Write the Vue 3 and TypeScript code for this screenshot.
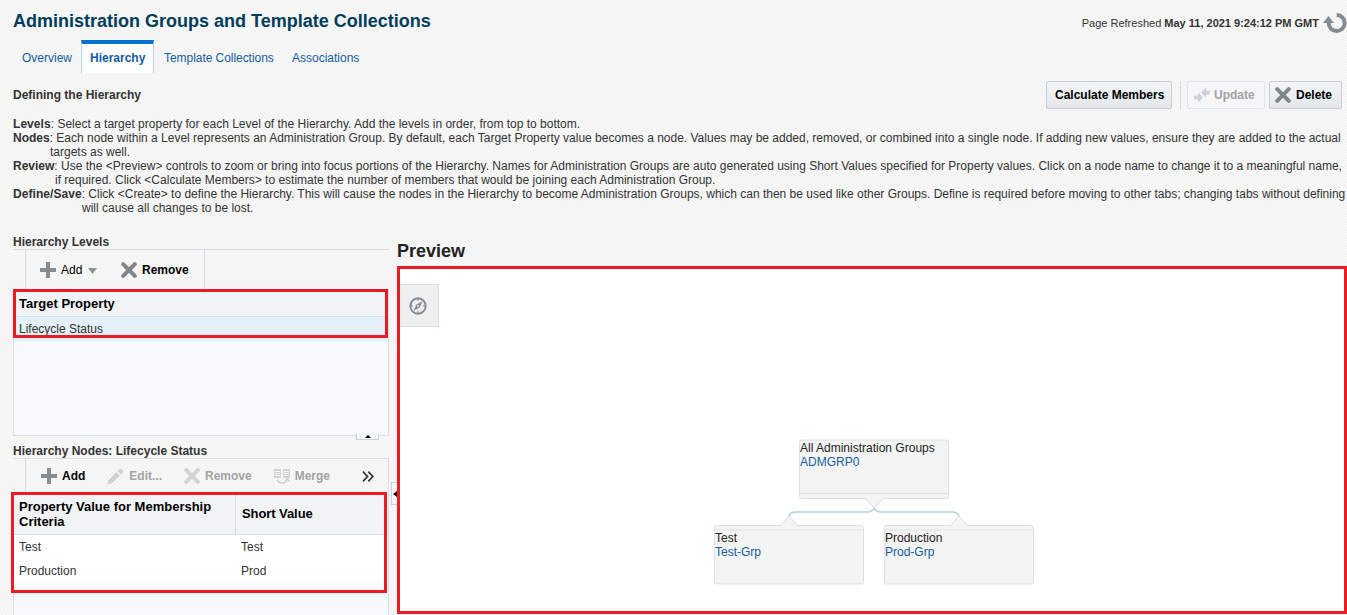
<script setup lang="ts">
interface Instruction { label: string; kind: string; first: string; second?: string }
interface GroupNode { title: string; name: string; kind: string }

const tabs = [
  { label: 'Overview', cls: 't1' },
  { label: 'Hierarchy', cls: 't2 active' },
  { label: 'Template Collections', cls: 't3' },
  { label: 'Associations', cls: 't4' },
]
const instructions: Instruction[] = [
  { label: 'Levels', kind: 'lev', first: 'Select a target property for each Level of the Hierarchy. Add the levels in order, from top to bottom.' },
  { label: 'Nodes', kind: 'nod', first: 'Each node within a Level represents an Administration Group. By default, each Target Property value becomes a node. Values may be added, removed, or combined into a single node. If adding new values, ensure they are added to the actual', second: 'targets as well.' },
  { label: 'Review', kind: 'rev', first: 'Use the <Preview> controls to zoom or bring into focus portions of the Hierarchy. Names for Administration Groups are auto generated using Short Values specified for Property values. Click on a node name to change it to a meaningful name,', second: 'if required. Click <Calculate Members> to estimate the number of members that would be joining each Administration Group.' },
  { label: 'Define/Save', kind: 'def', first: 'Click <Create> to define the Hierarchy. This will cause the nodes in the Hierarchy to become Administration Groups, which can then be used like other Groups. Define is required before moving to other tabs; changing tabs without defining', second: 'will cause all changes to be lost.' },
]
const rows = [
  { value: 'Test', short: 'Test' },
  { value: 'Production', short: 'Prod' },
]
const groups: GroupNode[] = [
  { title: 'All Administration Groups', name: 'ADMGRP0', kind: 'root' },
  { title: 'Test', name: 'Test-Grp', kind: 'test' },
  { title: 'Production', name: 'Prod-Grp', kind: 'prod' },
]
</script>

<template>
  <div class="page">
    <header class="top">
      <h1>Administration Groups and Template Collections</h1>
      <div class="refreshed">
        <span>Page Refreshed <b>May 11, 2021 9:24:12 PM GMT</b></span>
        <svg class="refresh" width="24" height="22" viewBox="0 0 24 22">
          <path d="M13.7 3A8 8 0 1 1 5.700 10.500" fill="none" stroke="#878c90" stroke-width="4" />
          <path d="M0 11L5.500 4L11 11Z" fill="#878c90" />
        </svg>
      </div>
    </header>
    <nav class="tabs">
      <a v-for="t in tabs" :key="t.label" :class="t.cls">{{ t.label }}</a>
    </nav>
    <div class="heading">
      <span class="defining">Defining the Hierarchy</span>
      <div class="actions">
        <button class="calc">Calculate Members</button>
        <i class="sep"></i>
        <button class="update off">
          <svg width="18" height="16" viewBox="0 0 18 16"><path d="M8 5.500L13 .5V3.500H17V7.500H13V10.500ZM1 8.500H5V5.500L10 10.500L5 15.500V12.500H1Z" fill="#d0d2d4" /></svg>
          <span>Update</span>
        </button>
        <button class="delete">
          <svg width="16" height="16" viewBox="0 0 16 16"><path d="M2.2 2.2L13.8 13.8M13.8 2.2L2.2 13.8" stroke="#80868a" stroke-width="4" stroke-linecap="round" /></svg>
          <span>Delete</span>
        </button>
      </div>
    </div>
    <section class="instructions">
      <div v-for="line in instructions" :key="line.label" :class="['line', line.kind]">
        <div class="first"><b>{{ line.label }}</b>: {{ line.first }}</div>
        <div v-if="line.second" class="second">{{ line.second }}</div>
      </div>
    </section>
    <main>
      <aside>
        <h2>Hierarchy Levels</h2>
        <div class="toolbar tb1">
          <div class="tools">
            <svg class="plus" width="16" height="16" viewBox="0 0 16 16"><path d="M8 0V16M0 8H16" stroke="#878c90" stroke-width="4" /></svg>
            <span class="addlabel">Add</span>
            <svg class="caret" width="9" height="6" viewBox="0 0 9 6"><path d="M0 0H9L4.5 6Z" fill="#8f9497" /></svg>
            <svg class="cross" width="16" height="16" viewBox="0 0 16 16"><path d="M2.2 2.2L13.8 13.8M13.8 2.2L2.2 13.8" stroke="#80868a" stroke-width="4" stroke-linecap="round" /></svg>
            <b>Remove</b>
          </div>
        </div>
        <div class="levels">
          <div class="th">Target Property</div>
          <div class="selected">Lifecycle Status</div>
          <div class="mark m1"></div>
          <div class="handle hup"><svg width="6" height="3" viewBox="0 0 6 3"><path d="M0 3L3 0L6 3Z" /></svg></div>
        </div>
        <h2 class="nodes-title">Hierarchy Nodes: Lifecycle Status</h2>
        <div class="toolbar tb2">
          <svg class="n-add" width="16" height="16" viewBox="0 0 16 16"><path d="M8 0V16M0 8H16" stroke="#878c90" stroke-width="4" /></svg>
          <b class="on">Add</b>
          <svg class="n-edit" width="17" height="17" viewBox="0 0 17 17"><path d="M.5 16.500L1.500 12L9.500 4L13 7.500L5 15.500ZM10.500 3L12.500 1Q13.500 0 14.500 1L16 2.500Q17 3.500 16 4.500L14 6.500Z" fill="#d1d3d5" /></svg>
          <b>Edit...</b>
          <svg class="n-remove" width="16" height="16" viewBox="0 0 16 16"><path d="M2.2 2.2L13.8 13.8M13.8 2.2L2.2 13.8" stroke="#d1d3d5" stroke-width="4" stroke-linecap="round" /></svg>
          <b>Remove</b>
          <svg class="n-merge" width="16" height="16" viewBox="0 0 16 16">
            <path d="M0 1H7V10H0ZM9 1H16V10H9Z" fill="#d1d3d5" />
            <path d="M1 3.500H6M1 5.500H6M1 7.500H6M10 3.500H15M10 5.500H15M10 7.500H15" stroke="#f5f5f5" />
            <path d="M3 12Q5 15 8 15Q12 15 13.500 11.500M11 13L13.700 10.500L15.500 13.500" fill="none" stroke="#d1d3d5" stroke-width="1.5" />
          </svg>
          <b>Merge</b>
          <svg class="more" width="12" height="11" viewBox="0 0 12 11"><path d="M1 .7L5.500 5.500L1 10.300M6.300 .7L10.800 5.500L6.300 10.300" fill="none" stroke="#333" stroke-width="1.700" /></svg>
        </div>
        <div class="nodes">
          <div class="thead">
            <div><span class="pv">Property Value for Membership</span><br><span class="cr">Criteria</span></div>
            <div class="sv">Short Value</div>
          </div>
          <div v-for="r in rows" :key="r.value" class="row"><span>{{ r.value }}</span><span>{{ r.short }}</span></div>
          <div class="mark m2"></div>
        </div>
      </aside>
      <div class="gutter"><div class="handle hleft"><svg width="4" height="6" viewBox="0 0 4 6"><path d="M4 0L0 3L4 6Z" /></svg></div></div>
      <section class="preview">
        <h3>Preview</h3>
        <div class="canvas">
          <div class="compass">
            <svg width="18" height="18" viewBox="0 0 18 18">
              <circle cx="9" cy="9" r="7.700" fill="none" stroke="#83898e" stroke-width="1.900" />
              <path d="M13.500 4.200L10.600 10.600L4.500 13.800L7.500 7.500Z" fill="#83898e" />
              <circle cx="9" cy="9" r="1" fill="#efefef" />
              <path d="M9 2V4M9 14V16M2 9H4M14 9H16" stroke="#83898e" />
            </svg>
          </div>
          <svg class="links" width="944" height="342" viewBox="400 269 944 342">
            <path d="M874 508Q872 512 867 512H796Q790 512 789 516M874 508Q876 512 881 512H952Q958 512 959 516" fill="none" stroke="#b9cddb" stroke-width="1.600" />
            <g fill="#f4f4f4" stroke="#dce1e5">
              <rect x="799.500" y="440" width="149" height="58.500" rx="2" />
              <rect x="714.500" y="525.500" width="149" height="58.500" rx="2" />
              <rect x="884.500" y="525.500" width="149" height="58.500" rx="2" />
              <path d="M799.500 493.500H948.500M714.500 530H863.500M884.500 530H1033.500" />
              <path d="M865 498.500L874 508L883 498.500M780 525.500L789 516L798 525.500M950 525.500L959 516L968 525.500" />
            </g>
            <path d="M866 498.500H882M781 525.500H797M951 525.500H967" stroke="#f4f4f4" />
          </svg>
          <div v-for="g in groups" :key="g.name" :class="['node', g.kind]"><div>{{ g.title }}</div><a>{{ g.name }}</a></div>
        </div>
      </section>
    </main>
  </div>
</template>

<style>
body { margin: 0; overflow: hidden; }
</style>

<style scoped>
* { box-sizing: border-box; }
.page { width: 1347px; height: 615px; overflow: hidden; font: 12px/14px "Liberation Sans", Arial, sans-serif; color: #333; background: linear-gradient(45deg, #f9f9f9 25%, #f2f2f2 25%, #f2f2f2 50%, #f9f9f9 50%, #f9f9f9 75%, #f2f2f2 75%) 0 0 / 4px 4px; display: flex; flex-direction: column; }
h1, h2, h3 { margin: 0; }
svg { display: block; flex: none; }
.top { height: 40px; flex: none; display: flex; justify-content: space-between; padding-left: 13px; white-space: nowrap; }
h1 { font-size: 18px; line-height: 22px; padding-top: 10px; color: #003d5b; }
.refreshed { display: flex; font-size: 11px; padding-top: 16px; }
.refresh { margin: -4px 0 0 4px; }
.tabs { display: flex; height: 33px; flex: none; padding-left: 13px; white-space: nowrap; color: #145c9e; }
.tabs a { padding: 11px 9px 0; }
.tabs .t1 { width: 68px; }
.tabs .t2 { width: 73px; padding: 7px 8px 0; border: 1px solid #c4ced7; border-width: 4px 1px 0; border-top-color: #0572ce; background: #fff; font-weight: bold; }
.tabs .t3 { width: 129px; padding-left: 10px; letter-spacing: -.05px; }
.heading { height: 44px; flex: none; display: flex; justify-content: space-between; padding: 8px 5px 0 13px; }
.defining { font-weight: bold; padding-top: 7px; }
.actions { display: flex; }
button { height: 28px; padding: 0; border: 1px solid #c4ced7; border-radius: 2px; background: linear-gradient(#f3f5f6, #e3e7ea); color: #000; font: bold 12px/14px "Liberation Sans", Arial, sans-serif; display: flex; align-items: center; white-space: nowrap; }
.calc { width: 126px; padding-left: 8px; }
.sep { width: 1px; height: 28px; background: #d6dfe6; margin: 0 6px 0 8px; }
.update { width: 78px; padding-left: 5px; gap: 3px; background: #f4f6f8; color: #a3a3a3; border-color: #dfe6eb; margin-right: 4px; }
.delete { width: 73px; padding-left: 5px; gap: 5px; }
.instructions { height: 118px; flex: none; white-space: nowrap; }
.line { padding-left: 13px; }
.lev b, .def b { letter-spacing: .06px; }
.nod .second { padding-left: 37px; }
.rev .second { padding-left: 42px; }
.def .second { padding-left: 69px; }
main { display: flex; flex: 1; min-height: 0; }
aside { width: 389px; padding-left: 13px; flex: none; }
h2 { font-size: 12px; line-height: 14px; height: 14px; white-space: nowrap; }
.toolbar { display: flex; align-items: center; border-top: 1px solid #d6dfe6; white-space: nowrap; color: #000; }
.tb1 { height: 41px; }
.tools { display: flex; align-items: center; height: 40px; width: 180px; margin-left: 12px; border-left: 1px solid #d6dfe6; border-right: 1px solid #d6dfe6; padding-left: 14px; }
.addlabel { margin-left: 5px; width: 22px; }
.caret { margin: 2px 0 0 5px; }
.cross { margin: 0 5px 0 24px; }
.levels { position: relative; height: 146px; width: 376px; background: #f8f9fd; border: 1px solid #d6dfe6; border-top: 0; }
.th { height: 27px; font: bold 13px/27px "Liberation Sans", Arial, sans-serif; padding-left: 5px; background: #f2f3f7; border-bottom: 1px solid #d6dfe6; color: #000; }
.selected { background: #e4f0fa; height: 24px; line-height: 24px; padding-left: 5px; }
.mark { position: absolute; border: 3px solid #ed1c24; pointer-events: none; }
.m1 { left: -1px; top: -1px; width: 375px; height: 49px; }
.handle { position: absolute; background: #f7f8fa; border: 1px solid #c4d0da; }
.hup { left: 342px; top: 144px; width: 23px; height: 6px; border-top: 0; padding: 1px 0 0 8px; }
.nodes-title { margin-top: 8px; }
.tb2 { height: 35px; margin-left: 0; padding-left: 28px; color: #a3a3a3; border-right: 1px solid #d6dfe6; background: linear-gradient(#d6dfe6, #d6dfe6) 12px 0 / 1px 100% no-repeat; }
.tb2 .on { color: #000; }
.n-add { margin-right: 5px; }
.n-edit { margin: 0 5px 0 22px; }
.n-remove { margin: 0 5px 0 22px; }
.n-merge { margin: 0 5px 0 22px; }
.more { margin-left: 32px; }
.nodes { position: relative; width: 376px; height: 140px; background: #f8f9fd; border: 1px solid #d6dfe6; border-top: 0; }
.thead { height: 42px; display: flex; background: #f2f3f7; border-bottom: 1px solid #d6dfe6; font: bold 13px/15px "Liberation Sans", Arial, sans-serif; color: #000; white-space: nowrap; }
.thead > div:first-child { width: 222px; border-right: 1px solid #d6dfe6; padding: 6px 0 0 5px; }
.thead .sv { padding: 13px 0 0 6px; letter-spacing: -.08px; }
.row { height: 24px; display: flex; background: #fff; line-height: 24px; padding-left: 5px; }
.row span:first-child { width: 222px; }
.m2 { left: -3px; top: -1px; width: 376px; height: 101px; }
.gutter { width: 8px; position: relative; flex: none; }
.hleft { left: 2px; top: 247px; width: 7px; height: 23px; border-right: 0; padding: 8px 0 0 1px; }
.preview { flex: 1; position: relative; }
h3 { font-size: 18px; line-height: 22px; height: 31px; padding-top: 5px; color: #222; }
.canvas { position: relative; width: 950px; height: 348px; background: #fff; border: 3px solid #ed1c24; }
.compass { position: absolute; left: 0; top: 15px; width: 39px; height: 43px; background: #efefef; border: 1px solid #d6dce1; border-left: 0; padding: 12px 0 0 9px; }
.links { position: absolute; left: 0; top: 0; }
.node { position: absolute; color: #222; white-space: nowrap; }
.node a { color: #145c9e; }
.root { left: 400px; top: 172px; }
.test { left: 315px; top: 262px; }
.prod { left: 485px; top: 262px; }
</style>
